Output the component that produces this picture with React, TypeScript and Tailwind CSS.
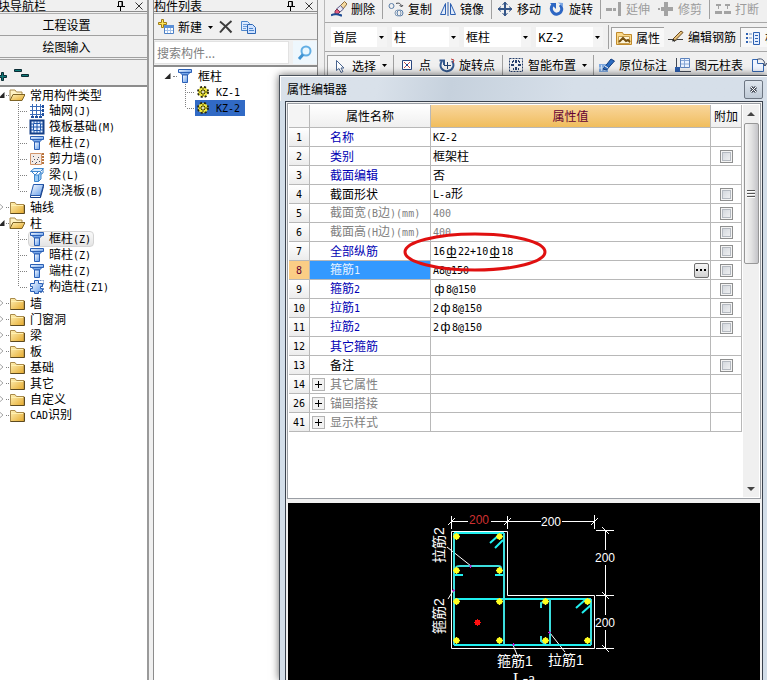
import { Fragment, useState } from "react"
import type { ReactNode } from "react"

type IconName = keyof typeof icons

type TreeNode = {
  label: string
  open?: boolean
  children?: { label: string; icon: IconName; selected?: boolean }[]
}

type PropertyRow = {
  no: number
  name: string
  value?: string
  tone?: "blue" | "black" | "gray"
  extra?: boolean
  group?: boolean
}

type ToolItem = {
  label?: string
  icon: IconName
  caret?: boolean
  disabled?: boolean
  pressed?: boolean
}

const navTree: TreeNode[] = [
  {
    label: "常用构件类型",
    open: true,
    children: [
      { label: "轴网(J)", icon: "axis" },
      { label: "筏板基础(M)", icon: "raft" },
      { label: "框柱(Z)", icon: "column" },
      { label: "剪力墙(Q)", icon: "wall" },
      { label: "梁(L)", icon: "beam" },
      { label: "现浇板(B)", icon: "slab" },
    ],
  },
  { label: "轴线" },
  {
    label: "柱",
    open: true,
    children: [
      { label: "框柱(Z)", icon: "column", selected: true },
      { label: "暗柱(Z)", icon: "column" },
      { label: "端柱(Z)", icon: "column" },
      { label: "构造柱(Z1)", icon: "tieColumn" },
    ],
  },
  { label: "墙" },
  { label: "门窗洞" },
  { label: "梁" },
  { label: "板" },
  { label: "基础" },
  { label: "其它" },
  { label: "自定义" },
  { label: "CAD识别" },
]

const properties: PropertyRow[] = [
  { no: 1, name: "名称", value: "KZ-2", tone: "blue" },
  { no: 2, name: "类别", value: "框架柱", tone: "blue", extra: true },
  { no: 3, name: "截面编辑", value: "否", tone: "blue" },
  { no: 4, name: "截面形状", value: "L-a形", extra: true },
  { no: 5, name: "截面宽(B边)(mm)", value: "400", tone: "gray", extra: true },
  { no: 6, name: "截面高(H边)(mm)", value: "400", tone: "gray", extra: true },
  { no: 7, name: "全部纵筋", value: "16Ф22+10Ф18", tone: "blue", extra: true },
  { no: 8, name: "箍筋1", value: "A8@150", tone: "blue", extra: true },
  { no: 9, name: "箍筋2", value: "ф8@150", tone: "blue", extra: true },
  { no: 10, name: "拉筋1", value: "2ф8@150", tone: "blue", extra: true },
  { no: 11, name: "拉筋2", value: "2ф8@150", tone: "blue", extra: true },
  { no: 12, name: "其它箍筋", tone: "blue" },
  { no: 13, name: "备注", extra: true },
  { no: 14, name: "其它属性", tone: "gray", group: true },
  { no: 26, name: "锚固搭接", tone: "gray", group: true },
  { no: 41, name: "显示样式", tone: "gray", group: true },
]

const editTools: (ToolItem | "sep")[] = [
  { label: "删除", icon: "erase" },
  "sep",
  { label: "复制", icon: "duplicate" },
  { label: "镜像", icon: "mirror" },
  "sep",
  { label: "移动", icon: "move" },
  { label: "旋转", icon: "rotate" },
  "sep",
  { label: "延伸", icon: "extend", disabled: true },
  { label: "修剪", icon: "trim", disabled: true },
  "sep",
  { label: "打断", icon: "breakLine", disabled: true },
  { icon: "breakLine", disabled: true },
]

const drawTools: (ToolItem | "sep")[] = [
  { label: "选择", icon: "pointer", caret: true, pressed: true },
  "sep",
  { label: "点", icon: "point" },
  { label: "旋转点", icon: "rotatePoint" },
  "sep",
  { label: "智能布置", icon: "smart", caret: true },
  "sep",
  { label: "原位标注", icon: "annotate" },
  { label: "图元柱表", icon: "columnTable" },
  { icon: "convert" },
]

const combos = [
  { name: "楼层", value: "首层", width: "w-14" },
  { name: "构件类型", value: "柱", width: "w-[67px]" },
  { name: "构件子类型", value: "框柱", width: "w-[67px]" },
  { name: "构件", value: "KZ-2", width: "w-[67px]" },
]

const toneStyles = {
  blue: "text-[#0000b4]",
  black: "text-black",
  gray: "text-[#808080]",
}

const icons = {
  folder: (
    <>
      <path d="M1.500 3.500h4.500l1.500 2h7.500v9h-13.500z" fill="url(#folder)" stroke="#a98a4a" />
      <path d="M1.500 14.500h14V6" fill="none" stroke="#5d4a20" />
      <path d="M2 6.500h12" stroke="#fff0b0" />
    </>
  ),
  folderOpen: (
    <>
      <path d="M1 13V3h5l1.500 2H13v3" fill="#fff3c4" stroke="#a98a4a" />
      <path d="M1 13.500 4 7.500h12l-3 6z" fill="url(#folder)" stroke="#7d6326" />
    </>
  ),
  axis: (
    <>
      <path d="M3.500 1v13M7.500 1v13M11.500 1v13M1 3.500h13M1 7.500h13M1 11.500h13" stroke="#3a6bb8" />
      <path d="M2 13h3v2H2zM6 13h3v2H6zM10 13h3v2h-3zM13 2h2v3h-2zM13 6h2v3h-2zM13 10h2v3h-2z" fill="#1f4f9f" />
    </>
  ),
  raft: (
    <>
      <path d="M1.500 1.500h13v13h-13z" fill="#e6f0ff" stroke="#143f87" strokeWidth="2" />
      <path d="M4.500 4.500h7v7h-7zM8 2v12M2 8h12" fill="none" stroke="#1d56ac" />
      <path d="M2 5h2M2 11h2M12 5h2M12 11h2M5 2v2M11 2v2M5 12v2M11 12v2" stroke="#1d56ac" />
    </>
  ),
  column: (
    <>
      <path d="M1.500 1.500h13v3h-13z" fill="url(#steel)" stroke="#2a5fb5" />
      <path d="M3 4.500h10L10.500 7h-5z" fill="#79a9ea" stroke="#2a5fb5" />
      <path d="M5.500 7h5v7.500h-5z" fill="url(#steel)" stroke="#2a5fb5" />
    </>
  ),
  wall: (
    <>
      <path d="M1.500 2.500h11v11h-11z" fill="#f4ece6" stroke="#d2966c" />
      <path d="M3 10h1v1H3zM5 8h1v1H5zM7 11h1v1H7zM9 6h1v1H9zM4 5h1v1H4zM8 8h1v1H8zM10 10h1v1h-1zM6 12h1v1H6z" fill="#4c5265" />
      <path d="M13 3h2M13 6h2M13 9h2M13 12h2" stroke="#b8753e" strokeWidth="2" />
    </>
  ),
  beam: (
    <>
      <path d="M1.500 4.500 5 1.500h9.500l-3 3z" fill="#d8ecff" stroke="#3f86cd" />
      <path d="M3 5l3 3 3-3M14 2v4l-3 2" fill="none" stroke="#3f86cd" />
      <path d="M5.500 8h4v6.500h-4zM9.500 8 12 5v7l-2.500 2.500" fill="#9accf6" stroke="#3f86cd" />
    </>
  ),
  slab: (
    <>
      <path d="M4.500 1.500h10l-3 11h-10z" fill="url(#steel)" stroke="#2559ae" />
      <path d="M1.500 12.500v2h10l3-11v-2M11.500 12.500v2" fill="none" stroke="#163f88" />
    </>
  ),
  tieColumn: (
    <>
      <path d="M5.500 1.500h4v3h4v3h-2v2h2v3h-4v2h-4v-2h-4v-3h2v-2h-2v-3h4z" fill="url(#steel)" stroke="#2a5fb5" />
      <path d="M10.500 1.500h4v4M14.500 9v4.500h-4" fill="none" stroke="#6f8fc0" strokeDasharray="2 1" />
    </>
  ),
  gear: (
    <>
      <circle cx="8" cy="8" r="5" fill="#f3ea3c" stroke="#2b2a12" strokeWidth="2" strokeDasharray="2 2" />
      <circle cx="8" cy="8" r="4" fill="#f3ea3c" />
      <path d="M8 4v8M4 8h8" stroke="#3c3a10" />
      <path d="M6 6h1v1H6zM9 6h1v1H9zM6 9h1v1H6zM9 9h1v1H9z" fill="#3c3a10" />
      <circle cx="8" cy="8" r="1" fill="#fff" />
    </>
  ),
  create: (
    <>
      <path d="M6.500 6.500h9v8h-9z" fill="#fff" stroke="#4c7fc4" />
      <path d="M6 6h10v3H6z" fill="#5b8fd6" />
      <path d="M9.500 9v5M12.500 9v5M7 11.500h8" stroke="#a4c2ea" />
      <path d="M3.500 .5h2v3h3v2h-3v3h-2v-3h-3v-2h3z" fill="#ffe65a" stroke="#a07d14" />
    </>
  ),
  remove: <path d="M2 2.500c4 3 8 7 11.500 11M13.500 2C9 5.500 5.500 9 2 13.500" fill="none" stroke="#3c3c3c" strokeWidth="2" />,
  copyDoc: (
    <>
      <path d="M1.500 2.500h6l2 2v7h-8z" fill="#dceaff" stroke="#4d86cc" />
      <path d="M3 5.500h4M3 7.500h4M3 9.500h3" stroke="#6d9edc" />
      <path d="M7.500 5.500h5l3 3v6h-8z" fill="#cfe2ff" stroke="#2d66b4" />
      <path d="M9 9.500h4M9 11.500h5" stroke="#4d86cc" />
    </>
  ),
  search: (
    <>
      <circle cx="9" cy="6" r="4.500" fill="#e8f7ff" stroke="#62aee4" strokeWidth="2" />
      <path d="m6 9.500-4 4.500" stroke="#3f93d2" strokeWidth="3" />
    </>
  ),
  erase: (
    <>
      <path d="m9 5 4.500-4.500L16 3l-4 5z" fill="#f5d9a0" stroke="#8a6a3a" />
      <path d="m5.500 8 4-3.500L12.500 8 9 11z" fill="#e8e8f6" stroke="#5c5c86" />
      <path d="m4 10 2-2 3 3-2 2H4z" fill="#e05c7e" stroke="#7c3450" />
      <path d="M0 14.500c3-2 5-1 7-1s2 1 4 1" fill="none" stroke="#1d4b94" strokeWidth="2" />
    </>
  ),
  duplicate: (
    <g fill="none" stroke="#5a7ea8">
      <circle cx="3.500" cy="5" r="2.500" />
      <circle cx="12" cy="12" r="3" />
      <circle cx="10" cy="12" r="3" stroke="#7f98b5" />
      <path d="M8 2.500c3-1 5 0 5.500 3M11.500 4l2 2 1.500-2" stroke="#44474d" />
    </g>
  ),
  mirror: (
    <g fill="none" stroke="#2c5fb0">
      <path d="M5.500 2.500v11h-5zM10.500 2.500v11h5z" fill="#e2ecfb" />
      <path d="M8 1v14" />
    </g>
  ),
  move: (
    <g fill="none" stroke="#335487">
      <path d="M8 1.500v13M1.500 8h13" strokeWidth="2" />
      <path d="m5.500 4 2.500-3 2.500 3M5.500 12 8 15l2.500-3M4 5.500 1 8l3 2.500M12 5.500 15 8l-3 2.500" />
    </g>
  ),
  rotate: (
    <>
      <path d="M4 3.500C0 8 4 14 8.500 13S14 7 11 4" fill="none" stroke="#2d66c3" strokeWidth="3" />
      <path d="M1 2h6v6z" fill="#2d66c3" />
      <path d="M9 1.500 14 2v4z" fill="#7da7e4" />
    </>
  ),
  extend: (
    <>
      <path d="M0 7h6v3H0zM7 7h3v3H7z" fill="#a3a3a3" />
      <path d="M12 1h3v14h-3z" fill="#a3a3a3" />
    </>
  ),
  trim: (
    <>
      <path d="M6 1h4v5h5v4h-5v5H6v-5H3V6h3z" fill="#a3a3a3" />
      <path d="M0 7h2v2H0z" fill="#a3a3a3" />
    </>
  ),
  breakLine: (
    <>
      <path d="M0 10h7v3H0zM9 10h7v3H9z" fill="#a3a3a3" />
      <path d="M1 3h5v2H1zM10 3h5v2h-5zM3 5h1v3H3zM12 5h1v3h-1z" fill="#a3a3a3" />
    </>
  ),
  props: (
    <>
      <path d="M.5 2.500h6l1 2h8v10H.5z" fill="#fbd98a" stroke="#c08a2c" />
      <path d="M2.500 6.500h11v7h-11z" fill="#fff6dc" stroke="#c9a050" />
      <path d="m3 12 4-4 3 3 2-1 2 2" fill="none" stroke="#765010" strokeWidth="2" />
    </>
  ),
  rebar: (
    <>
      <path d="M0 10.500h5l1 2 3-2h6" fill="none" stroke="#3c3c3c" strokeWidth="1" />
      <path d="m5 10 8-8 2 1.500-8 8z" fill="#e8c37c" stroke="#6b4a20" />
      <path d="m5 10 2 1.500-3 1z" fill="#222" />
    </>
  ),
  list: (
    <>
      <path d="M1 3h2v2H1zM1 7h2v2H1zM1 11h2v2H1z" fill="#2f62b2" />
      <path d="M4 4h3M4 8h3M4 12h3" stroke="#7193c5" />
      <path d="M8.500 2.500h6v12h-6z" fill="#e5efff" stroke="#2f62b2" />
      <path d="M10 5.500h3M10 8.500h3M10 11.500h3" stroke="#2f62b2" />
    </>
  ),
  pointer: <path d="M4.500 2.500v10l2.500-2 2 4 2-1-2-3.500h3z" fill="#fff" stroke="#49648f" />,
  point: (
    <>
      <path d="M3.500 3.500h9v9h-9z" fill="#fff" stroke="#2b4880" />
      <path d="m5 5 6 6M11 5l-6 6" stroke="#c04a4a" />
      <path d="M7 7h2v2H7z" fill="#24468c" />
    </>
  ),
  rotatePoint: (
    <g fill="none" stroke="#34598f">
      <path d="M3 4c-4 6 1 11 6 10s7-6 4-10" strokeWidth="2" />
      <path d="M.5 3.500H5V8" strokeWidth="2" />
      <path d="M8.500 5v7M5 8.500h7" stroke="#23406e" />
      <path d="m12 2 3 1-1 3" stroke="#bb4242" />
    </g>
  ),
  smart: (
    <g fill="none" stroke="#27406c">
      <path d="M1.500 1.500h13v13h-13z" strokeDasharray="2 1" />
      <path d="M8 3v3M8 10v3M3 8h3M10 8h3" strokeWidth="2" />
      <path d="M5 4h1M10 4h1M5 12h1M10 12h1M4 5h1M11 5h1" strokeWidth="2" />
    </g>
  ),
  annotate: (
    <>
      <path d="M0 7h9v8H0z" fill="#7fa9df" />
      <path d="M2.500 8v6M6 8v6M0 11h9" stroke="#cfe0f6" />
      <path d="m4 12 8-10 3.500 2-8 9z" fill="#2c6cc0" stroke="#153f80" />
      <path d="m6 9 3 2" stroke="#fff" />
    </>
  ),
  columnTable: (
    <>
      <path d="M5.500 1.500h9v9h-9z" fill="#eaf2ff" stroke="#5d83bd" />
      <path d="M6 3.500h8M9.500 2v8M6 7h8" stroke="#87a7d6" />
      <path d="M1.500 1v13.500H16" fill="none" stroke="#444b57" />
      <path d="M0 10h5v5H0z" fill="#2b5cab" />
    </>
  ),
  convert: (
    <>
      <path d="M1.500 2.500h5v4h6v8h-11z" fill="#eef4ff" stroke="#3568b4" />
      <path d="M6 2.500c5-2 8 1 8 6M11.500 6l2.500 3 2-3" fill="none" stroke="#3b4a66" />
    </>
  ),
}

function Icon({ name }: { name: IconName }) {
  return (
    <svg viewBox="0 0 16 16" className="size-4 shrink-0" aria-hidden="true">
      {icons[name]}
    </svg>
  )
}

// Latin runs take half the width of a CJK character,
// Ф is the ribbed bar grade (drawn with a foot), ф the plain one
function Mixed({ text }: { text: string }) {
  return (
    <>
      {text.split(/([\x20-\x7e]+|[Фф])/).map((part, i) => {
        if (part === "Ф" || part === "ф") {
          return (
            <span
              key={i}
              className={`inline-block w-[13px] text-center font-["Liberation_Sans"] text-xs leading-3 ${part === "Ф" ? "underline decoration-1 underline-offset-2 [text-decoration-skip-ink:none]" : ""}`}
            >
              ф
            </span>
          )
        }
        return i % 2 ? (
          <span key={i} className='font-["DejaVu_Sans_Mono",monospace] text-[10px]'>
            {part}
          </span>
        ) : (
          <Fragment key={i}>{part}</Fragment>
        )
      })}
    </>
  )
}

function Expander({ open }: { open?: boolean }) {
  return (
    <svg viewBox="0 0 8 16" className="h-4 w-2 shrink-0" aria-hidden="true">
      {open ? <path d="M6.500 5v6h-6z" fill="#262626" /> : <path d="m1 4.500 4 3.500-4 3.500z" fill="#fff" stroke="#a6a6a6" />}
    </svg>
  )
}

function Branch({ last }: { last: boolean }) {
  return (
    <svg viewBox="0 0 14 16" className="h-4 w-3.5 shrink-0" aria-hidden="true">
      <path d={last ? "M4.500 0v8M6 8.500h8" : "M4.500 0v16M6 8.500h8"} stroke="#808080" strokeDasharray="1 1" />
    </svg>
  )
}

function Caret() {
  return (
    <svg viewBox="0 0 10 16" className="h-4 w-2.5 shrink-0" aria-hidden="true">
      <path d="M2 7h5L4.500 10z" fill="#000" />
    </svg>
  )
}

function PanelTitle({ children }: { children: ReactNode }) {
  return (
    <div className="flex h-3 items-center border-b border-[#8c8c8c] pr-0.5">
      <h2 className="flex-1 leading-3">{children}</h2>
      <button aria-label="固定" className="mr-1.5">
        <svg viewBox="0 0 12 12" className="size-3">
          <path d="M3.500 6V1.500h4V6M7 2v4M2 6.500h8M5.500 7v4" fill="none" stroke="#000" />
        </svg>
      </button>
      <button aria-label="关闭">
        <svg viewBox="0 0 12 12" className="size-3">
          <path d="m2.500 2.500 7 7M9.500 2.500l-7 7" stroke="#333" />
        </svg>
      </button>
    </div>
  )
}

function NavPanel() {
  return (
    <aside className="-ml-3.5 flex w-[163px] shrink-0 flex-col border-r-2 border-[#9a9a9a]">
      <PanelTitle>模块导航栏</PanelTitle>
      <div className="mt-px flex flex-col border-t border-[#b0b0b0]">
        <button className="h-[22px] border-b border-[#a0a0a0]">工程设置</button>
        <button className="h-[22px] border-b border-[#a0a0a0]">绘图输入</button>
      </div>
      <div className="mt-px flex h-[26px] items-center border-t border-[#a0a0a0] pl-3">
        <button aria-label="全部展开">
          <svg viewBox="0 0 16 16" className="size-4">
            <path d="M3.500 7.500h2v3h3v2h-3v3h-2v-3h-3v-2h3z" fill="#0e7a78" stroke="#0b2b33" />
          </svg>
        </button>
        <button aria-label="全部折叠">
          <svg viewBox="0 0 16 16" className="size-4">
            <path d="M.5 4.500h7v2h-7zM7.500 9.500h7v2h-7z" fill="#0e7a78" stroke="#0b2b33" />
          </svg>
        </button>
      </div>
      <ul className="flex-1 border-t-2 border-[#8c8c8c] bg-white pl-3">
        {navTree.map((node, i) => (
          <li key={i}>
            <div className="flex h-4 items-center">
              <Expander open={node.open} />
              <span className="w-[3px] border-t border-dotted border-[#808080]" />
              <Icon name={node.open ? "folderOpen" : "folder"} />
              <span className="ml-[5px]">
                <Mixed text={node.label} />
              </span>
            </div>
            {node.children && (
              <ul className="pl-4">
                {node.children.map((child, j) => (
                  <li key={j} className="flex h-4 items-center">
                    <Branch last={j === node.children!.length - 1} />
                    <span
                      className={`flex h-4 items-center gap-1 rounded-sm border pr-0.5 ${child.selected ? "border-[#d4d4d4] bg-linear-to-b from-[#fafafa] to-[#e4e4e4]" : "border-transparent"}`}
                    >
                      <Icon name={child.icon} />
                      <span>
                        <Mixed text={child.label} />
                      </span>
                    </span>
                  </li>
                ))}
              </ul>
            )}
          </li>
        ))}
      </ul>
    </aside>
  )
}

function ComponentPanel() {
  return (
    <aside className="ml-1 flex w-[165px] shrink-0 flex-col border-x border-[#8c8c8c]">
      <PanelTitle>构件列表</PanelTitle>
      <div className="mt-px flex h-[27px] items-center border-y border-[#a8a8a8] pl-1">
        <button className="flex items-center gap-1">
          <Icon name="create" />
          新建
          <Caret />
        </button>
        <button aria-label="删除" className="ml-0.5">
          <Icon name="remove" />
        </button>
        <button aria-label="复制" className="ml-1.5">
          <Icon name="copyDoc" />
        </button>
      </div>
      <div className="flex h-[25px] items-center gap-1 py-px">
        <input
          aria-label="搜索构件"
          placeholder="搜索构件..."
          className="h-full w-0 flex-1 border border-[#e2e2e2] bg-white pl-0.5 outline-none placeholder:text-[#808080]"
        />
        <button aria-label="搜索" className="flex h-full w-6 items-center justify-center bg-[#eef7fd]">
          <Icon name="search" />
        </button>
      </div>
      <ul className="flex-1 border-t-2 border-[#8c8c8c] bg-white pt-px pl-2.5">
        <li>
          <div className="flex h-4 items-center">
            <Expander open />
            <span className="ml-px w-1 border-t border-dotted border-[#808080]" />
            <Icon name="column" />
            <span className="ml-[5px]">框柱</span>
          </div>
          <ul className="pl-[17px]">
            {["KZ-1", "KZ-2"].map((name, i) => (
              <li key={name} className="flex h-4 items-center">
                <Branch last={i === 1} />
                <span className={`flex h-4 items-center gap-[5px] pr-[5px] ${i === 1 ? "bg-[#316ac5]" : ""}`}>
                  <Icon name="gear" />
                  <span>
                    <Mixed text={name} />
                  </span>
                </span>
              </li>
            ))}
          </ul>
        </li>
      </ul>
    </aside>
  )
}

function ToolButton({ item }: { item: ToolItem }) {
  return (
    <button
      disabled={item.disabled}
      className={`flex h-5 shrink-0 items-center gap-1 px-1 ${item.disabled ? "text-[#9c9c9c]" : ""} ${item.pressed ? "border-t border-l border-[#a0a0a0] bg-[#f8f8f8]" : ""}`}
    >
      <Icon name={item.icon} />
      {item.label}
    </button>
  )
}

function Separator() {
  return <span className="mr-px ml-[3px] h-5 w-px shrink-0 bg-[#a0a0a0]" />
}

function ToolRow({ items }: { items: (ToolItem | "sep")[] }) {
  return (
    <>
      {items.map((item, i) =>
        item === "sep" ? (
          <Separator key={i} />
        ) : (
          <Fragment key={i}>
            <ToolButton item={item} />
            {item.caret && <Caret />}
          </Fragment>
        ),
      )}
    </>
  )
}

function Toolbars() {
  return (
    <header className="ml-1.5 min-w-0 flex-1 overflow-hidden border-l border-[#b8b8b8] whitespace-nowrap">
      <div className="flex h-[23px] items-center border-b border-[#a8a8a8] pb-1">
        <span className="mr-0.5 h-full w-px bg-[#a0a0a0]" />
        <ToolRow items={editTools} />
      </div>
      <div className="flex h-[29px] items-center border-b border-[#a8a8a8]">
        <span className="mr-1.5 h-6 w-px bg-[#a0a0a0]" />
        <div className="flex gap-[5px]">
          {combos.map((combo) => (
            <div key={combo.name} className={`relative flex ${combo.width}`}>
              <select aria-label={combo.name} className="h-5 w-full appearance-none bg-white pl-0.5 outline-none">
                <option>{combo.value}</option>
              </select>
              <span className="pointer-events-none absolute inset-y-0 right-0 flex items-center bg-[#f4f4f4]">
                <Caret />
              </span>
            </div>
          ))}
        </div>
        <span className="mr-0.5 ml-[5px] h-6 w-px shrink-0 bg-[#a0a0a0]" />
        <ToolButton item={{ label: "属性", icon: "props", pressed: true }} />
        <ToolButton item={{ label: "编辑钢筋", icon: "rebar" }} />
        <ToolButton item={{ label: "构件列表", icon: "list", pressed: true }} />
      </div>
      <div className="flex h-[26px] items-center">
        <span className="mr-0.5 h-5 w-px bg-[#a0a0a0]" />
        <ToolRow items={drawTools} />
      </div>
    </header>
  )
}

function PropertyTable() {
  const [active, setActive] = useState(8)
  const cell = "border-r border-b border-[#b8b8b8] p-0"

  return (
    <table className="w-full table-fixed border-separate border-spacing-0 bg-white">
      <colgroup>
        <col className="w-[21px]" />
        <col className="w-[121px]" />
        <col />
        <col className="w-[31px]" />
      </colgroup>
      <thead>
        <tr className="h-[23px]">
          <th className={`${cell} bg-[#f4f4f4]`} />
          <th className={`${cell} bg-linear-to-b from-white to-[#efefef] font-normal`}>属性名称</th>
          <th className={`${cell} bg-linear-to-b from-[#f9d69b] to-[#f0bd5c] font-normal text-[#640032]`}>属性值</th>
          <th className={`${cell} bg-linear-to-b from-white to-[#efefef] font-normal`}>附加</th>
        </tr>
      </thead>
      <tbody>
        {properties.map((row) => {
          const selected = row.no === active
          return (
            <tr key={row.no} className="h-[19px]" onClick={() => setActive(row.no)}>
              <td className={`${cell} text-center leading-4 ${selected ? "bg-[#fbcd85] text-[#640032]" : "bg-linear-to-b from-white to-[#ececec]"}`}>
                <Mixed text={String(row.no)} />
              </td>
              <td className={`${cell} leading-4 ${selected ? "bg-[#3399ff] text-[#e6f2ff]" : toneStyles[row.tone ?? "black"]}`}>
                <div className="flex h-4 items-center">
                  <span className="flex w-5 pl-0.5">
                    {row.group && (
                      <button
                        aria-label={`展开${row.name}`}
                        className="flex size-[13px] items-center justify-center border border-[#b4b4b4] bg-[#f2f2f2]"
                      >
                        <svg viewBox="0 0 9 9" className="size-[9px]">
                          <path d="M1 4.500h7M4.500 1v7" stroke="#000" />
                        </svg>
                      </button>
                    )}
                  </span>
                  <span>
                    <Mixed text={row.name} />
                  </span>
                </div>
              </td>
              <td className={`${cell} relative leading-4 ${row.tone === "gray" ? "text-[#808080]" : ""}`}>
                <div className="flex h-4 items-center pr-px pl-0.5">
                  <span className="flex-1">
                    <Mixed text={row.value ?? ""} />
                  </span>
                  {selected && (
                    <button
                      aria-label="更多"
                      className="flex h-[15px] w-[15px] items-center justify-center rounded-xs border border-[#707070] bg-linear-to-b from-[#f6f6f6] to-[#d2d2d2]"
                    >
                      <svg viewBox="0 0 11 3" className="h-[3px] w-[11px]">
                        <path d="M0 0h2v2H0zM4 0h2v2H4zM8 0h2v2H8z" />
                      </svg>
                    </button>
                  )}
                </div>
                {row.no === 7 && (
                  <svg
                    viewBox="0 0 144 42"
                    className="pointer-events-none absolute -top-[11px] -left-7 z-10 h-[42px] w-36"
                    aria-hidden="true"
                  >
                    <ellipse cx="72" cy="21" rx="70" ry="18" fill="none" stroke="#e01010" strokeWidth="3" />
                  </svg>
                )}
              </td>
              <td className={cell}>
                {row.extra && (
                  <input
                    type="checkbox"
                    aria-label={`附加${row.name}`}
                    className="mx-auto block size-[13px] appearance-none border border-[#8e8f8f] bg-linear-to-br from-[#cdd2d9] to-[#f6f6f6] shadow-[inset_0_0_0_1px_#f4f4f4,inset_0_0_0_2px_#b4b9c0] checked:bg-[#3399ff]"
                  />
                )}
              </td>
            </tr>
          )
        })}
      </tbody>
    </table>
  )
}

function ScrollBar() {
  return (
    <div className="ml-px flex w-4 flex-col items-center bg-[#f0f0f0]" aria-hidden="true">
      <svg viewBox="0 0 16 18" className="h-[18px] w-4">
        <path d="m4 11 4-4 4 4z" fill="#444" />
      </svg>
      <div className="flex h-[141px] w-[15px] flex-col items-center justify-center gap-px rounded-xs border border-[#979797] bg-linear-to-r from-[#f6f6f6] via-[#e2e2e2] to-[#c4c4c8]">
        <span className="h-0.5 w-2 border-t border-[#555] bg-white" />
        <span className="h-0.5 w-2 border-t border-[#555] bg-white" />
        <span className="h-0.5 w-2 border-t border-[#555] bg-white" />
      </div>
      <svg viewBox="0 0 16 18" className="mt-auto h-[18px] w-4">
        <path d="m4 8 4 4 4-4z" fill="#444" />
      </svg>
    </div>
  )
}

const bars = [
  [456, 536],
  [499, 536],
  [456, 570],
  [499, 570],
  [456, 601],
  [499, 601],
  [545, 601],
  [587, 601],
  [456, 640],
  [499, 640],
  [545, 640],
  [587, 640],
]

function SectionDrawing() {
  return (
    <svg
      viewBox="420 503 208 200"
      className='h-[200px] w-52 shrink-0 font-["Liberation_Sans","Noto_Sans_CJK_SC",sans-serif]'
      role="img"
      aria-label="L-a形截面"
    >
      <g fill="none" stroke="#fff">
        <path d="M451.500 531.500h56v64h87v53h-143z" />
        <path d="M451 521.500h17M491 521.500h50M562 521.500h33" />
        <path d="M451.500 516v13M507.500 516v13M594.500 515v14" />
        <path d="m448 525 7-7M504 525l7-7M591 525l7-7" />
        <path d="M605.500 530v20M605.500 565v50M605.500 630v19" />
        <path d="M596 530.500h18M596 595.500h18M596 648.500h18" />
        <path d="m602 527 7 7M602 592l7 7M602 645l7 7" />
        <path d="m447 547 24 19M448 599l5-8M513 645l5 12M550 633l15 19" />
      </g>
      <g fill="none" stroke="#20f0f0" strokeWidth="2">
        <path d="M454 533h50M454 599h137M454 645h137" />
        <path d="M454 533v112M504 533v112M550 599v46M591 599v46" stroke="#3cdede" />
        <path d="M456 568c0-2 2-2 4-2h38c3 0 3 1 3 3" stroke="#3cdede" />
        <path d="M455 575h8M495 575h8" />
        <path d="m490 543 9-8M495 548l8-8M576 608l9-8M582 613l9-8" />
        <path d="M541 608v-5l4-2M541 636v5l4 3" stroke="#3cdede" />
      </g>
      {bars.map(([x, y]) => (
        <g key={`${x}-${y}`} fill="#ffff20">
          <circle cx={x + 0.5} cy={y + 0.5} r="3" />
          <path d={`M${x - 3} ${y}h7v1h-7zM${x} ${y - 3}h1v7h-1z`} />
        </g>
      ))}
      <path d="M475 620h5v5h-5zM474 622h7v1h-7zM477 619h1v7h-1z" fill="#ff1010" />
      <path d="M469 566h3M470.500 565v3M452 590.500h3M453.500 589v3M512 644.500h3M513.500 643v3M548 632.500h3M549.500 631v3" stroke="#b030d0" />
      <g fill="#fff" fontSize="12" textAnchor="middle">
        <text x="479" y="524" fill="#d03030">
          200
        </text>
        <text x="551" y="526">
          200
        </text>
        <text x="605" y="562">
          200
        </text>
        <text x="605" y="627">
          200
        </text>
      </g>
      <g fill="#fff" fontSize="14" textAnchor="middle">
        <text transform="translate(444 545) rotate(-90)">拉筋2</text>
        <text transform="translate(444 616) rotate(-90)">箍筋2</text>
        <text x="515" y="666">
          箍筋1
        </text>
        <text x="566" y="665">
          拉筋1
        </text>
        <text x="524" y="684" fontSize="16" className='font-["Liberation_Serif",serif]'>
          L-a
        </text>
      </g>
    </svg>
  )
}

function PropertyDialog() {
  return (
    <section className="absolute top-[75px] right-0 bottom-0 left-[279px] flex flex-col border-t border-l border-[#4a525c] bg-[#d3dee9] pr-1 pl-[5px] shadow-[0_0_8px_rgba(0,0,0,0.6)]">
      <div className="-mr-1 -ml-[5px] flex h-[25px] items-center border-t border-l border-white bg-linear-100 from-[#d9e1ea] from-20% via-[#c6d1dd] via-35% to-[#d6dfe9] to-60% pr-1 pl-1.5">
        <h1 className="flex-1">属性编辑器</h1>
        <button
          aria-label="关闭"
          className="flex h-[19px] w-[19px] items-center justify-center rounded-xs border border-[#6d7682] bg-linear-to-b from-[#dfe6ee] to-[#bfcad6]"
        >
          <svg viewBox="0 0 9 9" className="size-[9px]">
            <path d="m2 2 5 5M7 2 2 7" stroke="#454c58" strokeWidth="3" />
            <path d="m2 2 5 5M7 2 2 7" stroke="#fff" />
          </svg>
        </button>
      </div>
      <div className="flex min-h-0 flex-1 flex-col border border-b-0 border-[#3a424e] bg-[#f0f0f0] px-px pt-px">
        <div className="flex h-[396px] shrink-0 border border-[#9a9ea4] bg-white p-px">
          <div className="min-w-0 flex-1">
            <PropertyTable />
          </div>
          <ScrollBar />
        </div>
        <div className="mx-px mt-1 flex min-h-0 flex-1 items-start justify-center overflow-hidden bg-black">
          <SectionDrawing />
        </div>
      </div>
    </section>
  )
}

export default function App() {
  return (
    <div className='relative flex h-screen overflow-hidden bg-[#f0f0f0] font-["Noto_Sans_CJK_SC",sans-serif] text-xs leading-4 text-black'>
      <svg className="absolute size-0" aria-hidden="true">
        <defs>
          <linearGradient id="folder" x1="0" y1="0" x2="1" y2="1">
            <stop offset="0" stopColor="#fff2b8" />
            <stop offset="1" stopColor="#e5a92c" />
          </linearGradient>
          <linearGradient id="steel" x1="0" y1="0" x2="1" y2="1">
            <stop offset="0" stopColor="#fff" />
            <stop offset="1" stopColor="#5f9aea" />
          </linearGradient>
        </defs>
      </svg>
      <NavPanel />
      <ComponentPanel />
      <Toolbars />
      <PropertyDialog />
    </div>
  )
}
